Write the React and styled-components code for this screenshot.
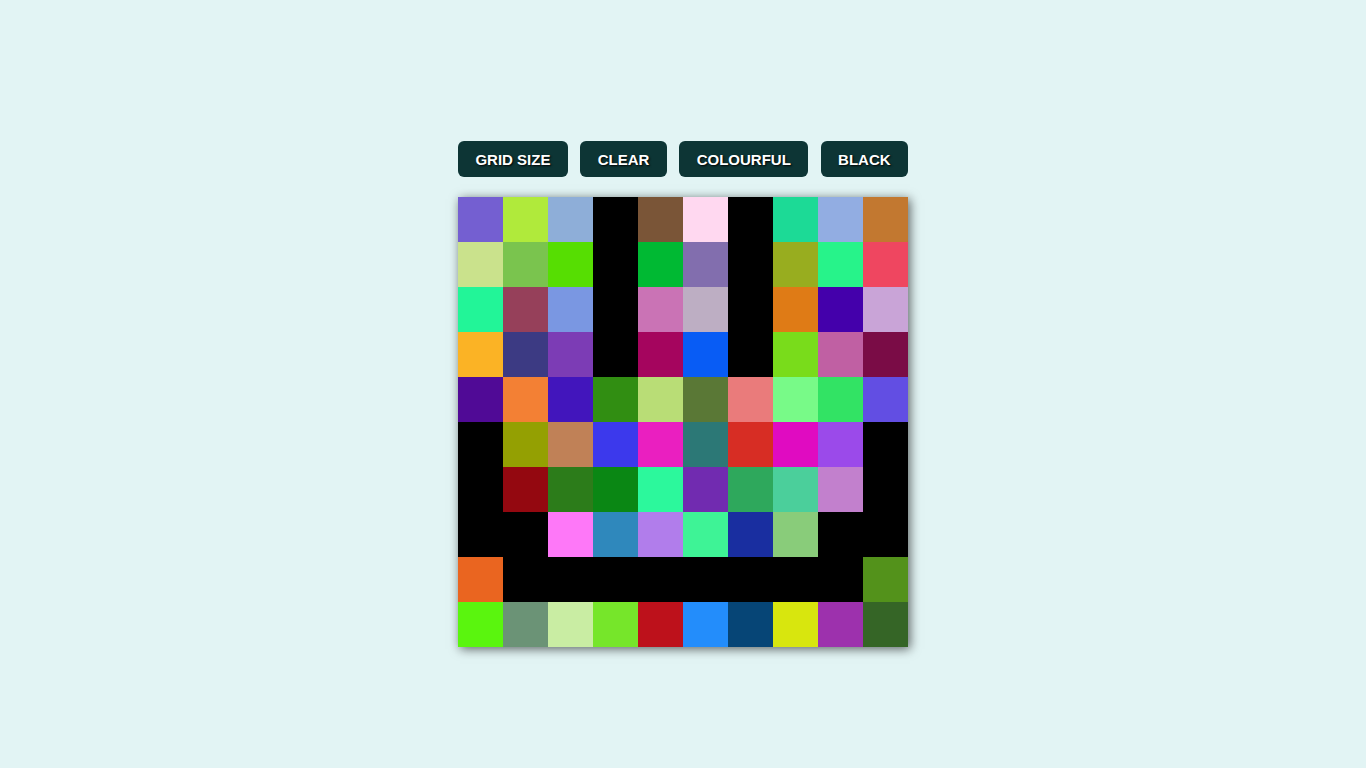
import React from "react";
import styled, { createGlobalStyle } from "styled-components";

const GlobalStyle = createGlobalStyle`
  body {
    margin: 0;
    background: #e2f4f4;
    font-family: "Liberation Sans", Arial, sans-serif;
  }
`;

const Page = styled.div`
  display: flex;
  flex-direction: column;
  align-items: center;
  padding-top: 141px;
  min-height: 100vh;
  box-sizing: border-box;
`;

const Toolbar = styled.div`
  display: flex;
  justify-content: space-between;
  width: 450px;
  margin-bottom: 20px;
`;

const Button = styled.button`
  height: 36px;
  padding: 0 17.4px;
  border: none;
  border-radius: 6px;
  background: #0d3535;
  color: #ffffff;
  font-family: "Liberation Sans", Arial, sans-serif;
  font-weight: bold;
  font-size: 15px;
  text-shadow: 1px 1px 2px #000;
  cursor: pointer;
`;

const Grid = styled.div`
  display: grid;
  grid-template-columns: repeat(${props => props.size}, 45px);
  grid-auto-rows: 45px;
  box-shadow: 2px 2px 10px rgba(0, 0, 0, 0.6);
`;

const Cell = styled.div`
  background: ${props => props.color};
`;

const K = "#000000";
const colours = [
  ["#745fd1", "#b0ea3b", "#8eaed8", K, "#7a5537", "#ffd8f0", K, "#1cda96", "#92ade2", "#c27830"],
  ["#cae28c", "#7ac44e", "#56de02", K, "#00b933", "#826eae", K, "#98ad1f", "#27f38a", "#ef4660"],
  ["#22f598", "#96405a", "#7a97e2", K, "#ca73b5", "#bdaec3", K, "#df7b16", "#4400ab", "#c9a4d7"],
  ["#fbb325", "#3c3a83", "#7c3cb5", K, "#a5055e", "#085cf5", K, "#79dc1b", "#c060a3", "#7a0c46"],
  ["#500a96", "#f38034", "#4215bc", "#318e12", "#b9dd76", "#5a7836", "#ea7b7b", "#78fa88", "#32e364", "#624ee3"],
  [K, "#94a002", "#c08157", "#3c39ec", "#ea1fc0", "#2c7876", "#d72d24", "#e00bc1", "#9b4aea", K],
  [K, "#940810", "#2c7c1a", "#0a8714", "#2cf89c", "#712bb0", "#2ea85c", "#4bcf9b", "#c280cd", K],
  [K, K, "#fe78f8", "#2f88bc", "#b17deb", "#3ef396", "#192ea0", "#89cc7a", K, K],
  ["#ea6520", K, K, K, K, K, K, K, K, "#53921b"],
  ["#5af50e", "#6b9376", "#c9eda3", "#76e62a", "#bd111b", "#238dfb", "#064576", "#d8e60e", "#9d31ad", "#356526"],
];

export default function App() {
  return (
    <Page>
      <GlobalStyle />
      <Toolbar>
        <Button>GRID SIZE</Button>
        <Button>CLEAR</Button>
        <Button>COLOURFUL</Button>
        <Button>BLACK</Button>
      </Toolbar>
      <Grid size={10}>
        {colours.flat().map((c, i) => (
          <Cell key={i} color={c} />
        ))}
      </Grid>
    </Page>
  );
}
